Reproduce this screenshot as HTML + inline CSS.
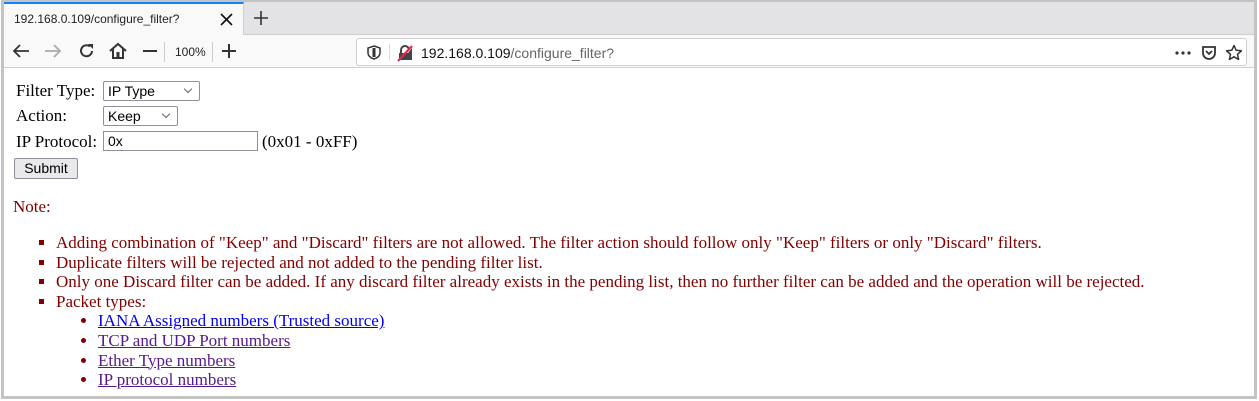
<!DOCTYPE html>
<html><head><meta charset="utf-8"><style>
*{margin:0;padding:0;box-sizing:border-box}
body{width:1259px;height:401px;background:#fff;position:relative;overflow:hidden;font-family:"Liberation Serif",serif}
.frame{position:absolute;left:1px;top:0;width:1256px;height:399px;border:3px solid #c3c3c3;border-top-width:2px;}
.tabbar{position:absolute;left:0;top:0;width:100%;height:33px;background:#e3e3e5;border-bottom:1px solid #cfcfd1}
.tab{position:absolute;left:0;top:0;width:240px;height:34px;background:#f9f9fa;border-top:2px solid #0a84ff;border-right:1px solid #cfcfd1}
.tab span{position:absolute;left:10px;top:8px;font:12px "Liberation Sans",sans-serif;color:#222}
.toolbar{position:absolute;left:0;top:33px;width:100%;height:33px;background:#f9f9fa;border-bottom:1px solid #cfcfd1}
.url{position:absolute;left:352px;top:3px;width:891px;height:28px;background:#fff;border:1px solid #d0d0d2;border-radius:3px}
.sans{font-family:"Liberation Sans",sans-serif}
.content{position:absolute;left:0;top:67px;width:100%;font-size:17px;color:#000}
.row{position:absolute;left:13px;height:22px;line-height:22px}
.sel{position:absolute;height:20px;border:1px solid #8f8f9d;border-radius:2px;background:#fff;font:14px "Liberation Sans",sans-serif;line-height:18px;padding-left:4px}
.dd:after{content:"";position:absolute;right:8px;top:4px;width:5px;height:5px;border-right:1px solid #666;border-bottom:1px solid #666;transform:rotate(45deg)}
ul{position:absolute;color:#800000;line-height:19.6px}
a{color:#0000ee}
a.v{color:#551a8b}
</style></head><body>
<div class="frame">
<div class="tabbar">
 <div class="tab"><span>192.168.0.109/configure_filter?</span>
 <svg style="position:absolute;left:216px;top:9px" width="13" height="13"><path d="M1 1L12 12M12 1L1 12" stroke="#111" stroke-width="1.6"/></svg></div>
 <svg style="position:absolute;left:249px;top:8px" width="16" height="16"><path d="M8 1V15M1 8H15" stroke="#333" stroke-width="1.6"/></svg>
</div>
<div class="toolbar">
 <svg style="position:absolute;left:8px;top:8px" width="18" height="16"><path d="M17 8H2M8 2L2 8L8 14" stroke="#333" stroke-width="1.8" fill="none"/></svg>
 <svg style="position:absolute;left:40px;top:8px" width="18" height="16"><path d="M1 8H16M10 2L16 8L10 14" stroke="#aaa" stroke-width="1.8" fill="none"/></svg>
 <svg style="position:absolute;left:74px;top:7px" width="18" height="18"><path d="M14 9A5.5 5.5 0 1 1 12 4.5" stroke="#333" stroke-width="2" fill="none"/><path d="M10 2H15V7Z" fill="#333"/></svg>
 <svg style="position:absolute;left:104px;top:6px" width="20" height="20"><path d="M2 10L10 3L18 10M5 8V17H15V8" stroke="#333" stroke-width="2" fill="none"/><rect x="8.5" y="11" width="3" height="6" fill="#333"/></svg>
 <svg style="position:absolute;left:138px;top:14px" width="16" height="4"><path d="M1 2H15" stroke="#333" stroke-width="2"/></svg>
 <div style="position:absolute;left:160px;top:7px;width:1px;height:20px;background:#ccc"></div>
 <div class="sans" style="position:absolute;left:171px;top:10px;font-size:12px;color:#222">100%</div>
 <div style="position:absolute;left:208px;top:7px;width:1px;height:20px;background:#ccc"></div>
 <svg style="position:absolute;left:217px;top:8px" width="16" height="16"><path d="M8 1V15M1 8H15" stroke="#333" stroke-width="2"/></svg>
 <div class="url">
  <svg style="position:absolute;left:10px;top:6px" width="14" height="15"><path d="M7 1L13 3V8C13 11 10 13 7 14C4 13 1 11 1 8V3Z" stroke="#333" stroke-width="1.5" fill="none"/><path d="M7 3V12" stroke="#333" stroke-width="3"/></svg>
  <div style="position:absolute;left:32px;top:5px;width:1px;height:17px;background:#ddd"></div>
  <svg style="position:absolute;left:39px;top:5px" width="18" height="18"><path d="M3 16V9H12L16 4V16Z" fill="#444"/><path d="M5 9V6A4 4 0 0 1 13 6" stroke="#444" stroke-width="2" fill="none"/><path d="M2 17L16 2" stroke="#e22850" stroke-width="2.2"/></svg>
  <div class="sans" style="position:absolute;left:64px;top:6px;font-size:14px;color:#111">192.168.0.109<span style="color:#666">/configure_filter?</span></div>
  <svg style="position:absolute;left:818px;top:12px" width="16" height="4"><circle cx="2" cy="2" r="1.6" fill="#333"/><circle cx="8" cy="2" r="1.6" fill="#333"/><circle cx="14" cy="2" r="1.6" fill="#333"/></svg>
  <svg style="position:absolute;left:844px;top:6px" width="16" height="16"><path d="M2 2H14V8A6 6 0 0 1 2 8Z" stroke="#333" stroke-width="1.8" fill="none"/><path d="M5 6L8 9L11 6" stroke="#333" stroke-width="1.8" fill="none"/></svg>
  <svg style="position:absolute;left:868px;top:5px" width="18" height="18"><path d="M9 1.5L11.2 6.3L16.4 6.8L12.5 10.3L13.6 15.5L9 12.8L4.4 15.5L5.5 10.3L1.6 6.8L6.8 6.3Z" stroke="#333" stroke-width="1.5" fill="none" stroke-linejoin="round"/></svg>
 </div>
</div>
</div>
<div class="content">
 <div class="row" style="top:13px;left:16px">Filter Type:</div>
 <div class="sel dd" style="left:103px;top:14px;width:97px">IP Type</div>
 <div class="row" style="top:38px;left:16px">Action:</div>
 <div class="sel dd" style="left:103px;top:39px;width:75px">Keep</div>
 <div class="row" style="top:64px;left:16px">IP Protocol:</div>
 <div class="sel" style="left:103px;top:64px;width:155px;border-radius:0">0x</div>
 <div class="row" style="top:64px;left:262px">(0x01 - 0xFF)</div>
 <div class="sans" style="position:absolute;left:14px;top:91px;width:64px;height:21px;background:#e9e9ed;border:1px solid #8f8f9d;border-radius:2px;font-size:14px;text-align:center;line-height:19px">Submit</div>
 <div style="position:absolute;left:13px;top:130px;color:#800000">Note:</div>
 <ul style="left:56px;top:166px;list-style:square">
  <li>Adding combination of "Keep" and "Discard" filters are not allowed. The filter action should follow only "Keep" filters or only "Discard" filters.</li>
  <li>Duplicate filters will be rejected and not added to the pending filter list.</li>
  <li>Only one Discard filter can be added. If any discard filter already exists in the pending list, then no further filter can be added and the operation will be rejected.</li>
  <li>Packet types:
   <ul style="position:static;list-style:disc;padding-left:42px">
    <li><a href="#">IANA Assigned numbers (Trusted source)</a></li>
    <li><a class="v" href="#">TCP and UDP Port numbers</a></li>
    <li><a class="v" href="#">Ether Type numbers</a></li>
    <li><a class="v" href="#">IP protocol numbers</a></li>
   </ul></li>
 </ul>
</div>
</body></html>
